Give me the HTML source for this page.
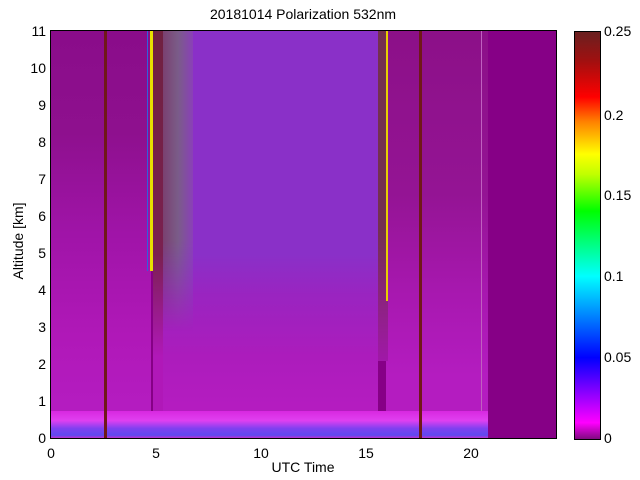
<!DOCTYPE html>
<html><head><meta charset="utf-8"><style>
body{margin:0;width:640px;height:480px;background:#fff;position:relative;overflow:hidden;font-family:"Liberation Sans",sans-serif;color:#000}
.a{position:absolute}
.t{position:absolute;font-size:14px;line-height:14px}
.yl{position:absolute;right:594px;font-size:14px;line-height:14px;text-align:right}
.xl{position:absolute;top:445px;font-size:14px;width:30px;text-align:center;margin-left:-15px}
.cl{position:absolute;left:604px;font-size:14px;line-height:14px}
</style></head><body>
<div class="t" style="left:0;width:606px;text-align:center;top:7px">20181014 Polarization 532nm</div>

<div class="a" style="left:51px;top:31px;width:505px;height:407px;background:#860086;overflow:hidden">
  <div class="a" style="left:0;top:0;width:100px;height:407px;background:linear-gradient(#8a0c8a 0%,#8e108e 25%,#a014a8 50%,#b018b8 75%,#b41cc0 92%)"></div>
  <div class="a" style="left:112px;top:0;width:215px;height:407px;background:linear-gradient(#8a30c8 0%,#8a30c8 55%,#9a24c0 65%,#ac1cbc 80%,#b41cc0 92%)"></div>
  <div class="a" style="left:112px;top:0;width:30px;height:300px;background:linear-gradient(90deg,#7a4070,#7a5c88,#8a40b8);-webkit-mask:linear-gradient(#000 70%,transparent);mask:linear-gradient(#000 70%,transparent)"></div>
  <div class="a" style="left:102px;top:0;width:10px;height:407px;background:linear-gradient(#702040 0%,#7a2050 55%,#b018b8 80%)"></div>
  <div class="a" style="left:335px;top:0;width:102px;height:407px;background:linear-gradient(#8c1088 0%,#941494 40%,#a818b0 65%,#b41cc0 85%)"></div>
  <div class="a" style="left:327px;top:0;width:10px;height:330px;background:linear-gradient(#743050 0%,#743050 60%,#a018a8 100%)"></div>
  <div class="a" style="left:0;top:380px;width:437px;height:27px;background:linear-gradient(#d828e0 0%,#e040f0 35%,#8040f0 65%,#6048f0 90%,#c030d0 100%)"></div>
  <div class="a" style="left:53px;top:0;width:3px;height:407px;background:#701818"></div>
  <div class="a" style="left:96px;top:0;width:1px;height:240px;background:#3060e0"></div>
  <div class="a" style="left:99px;top:0;width:3px;height:240px;background:#e8e000"></div>
  <div class="a" style="left:335px;top:0;width:2px;height:270px;background:#e8d000"></div>
  <div class="a" style="left:368px;top:0;width:3px;height:407px;background:#701818"></div>
  <div class="a" style="left:430px;top:0;width:1px;height:380px;background:#c060c0"></div>
</div>
<div class="a" style="left:50px;top:30px;width:505px;height:407px;border:1px solid #000"></div>

<div class="yl" style="top:431px">0</div>
<div class="yl" style="top:394px">1</div>
<div class="yl" style="top:357px">2</div>
<div class="yl" style="top:320px">3</div>
<div class="yl" style="top:283px">4</div>
<div class="yl" style="top:246px">5</div>
<div class="yl" style="top:209px">6</div>
<div class="yl" style="top:172px">7</div>
<div class="yl" style="top:135px">8</div>
<div class="yl" style="top:98px">9</div>
<div class="yl" style="top:61px">10</div>
<div class="yl" style="top:24px">11</div>
<div class="xl" style="left:51px">0</div>
<div class="xl" style="left:156px">5</div>
<div class="xl" style="left:261px">10</div>
<div class="xl" style="left:366px">15</div>
<div class="xl" style="left:471px">20</div>
<div class="t" style="left:0;width:606px;text-align:center;top:460px">UTC Time</div>
<div class="t" style="left:-37px;top:234px;width:110px;text-align:center;transform:rotate(-90deg)">Altitude [km]</div>

<div class="a" style="left:574px;top:31px;width:25px;height:407px;border:1px solid #000;background:linear-gradient(0deg,#800a80 0%,#ff00ff 4%,#8000ff 12%,#0000ff 20%,#0080ff 30%,#00ffff 40%,#00ff80 48%,#00ff00 56%,#c0ff00 65%,#ffff00 70%,#ff8000 78%,#ff0000 84%,#a01010 93%,#6a2020 100%)"></div>
<div class="cl" style="top:24px">0.25</div>
<div class="cl" style="top:108px">0.2</div>
<div class="cl" style="top:188px">0.15</div>
<div class="cl" style="top:269px">0.1</div>
<div class="cl" style="top:350px">0.05</div>
<div class="cl" style="top:431px">0</div>
</body></html>
